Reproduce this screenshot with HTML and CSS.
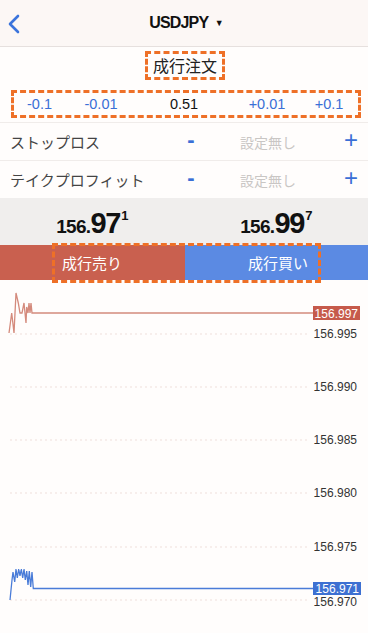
FILE: index.html
```html
<!DOCTYPE html>
<html lang="ja">
<head>
<meta charset="utf-8">
<title>USDJPY 成行注文</title>
<link rel="stylesheet" href="styles.css">
</head>
<body>
<div class="app">
  <header class="header">
    <div class="back">
      <svg width="14" height="20" viewBox="0 0 14 20"><path d="M11 2 L3 10 L11 18" fill="none" stroke="#3b74dc" stroke-width="2.6" stroke-linecap="round" stroke-linejoin="round"/></svg>
    </div>
    <div class="symbol">USDJPY <span class="caret">▼</span></div>
    <div></div>
  </header>

  <div class="title-wrap"><div class="title dashed">成行注文</div></div>

  <div class="steps dashed">
    <span class="step">-0.1</span>
    <span class="step">-0.01</span>
    <span class="step qty">0.51</span>
    <span class="step">+0.01</span>
    <span class="step">+0.1</span>
  </div>

  <div class="row">
    <span class="label">ストップロス</span>
    <span class="minus">-</span>
    <span class="none">設定無し</span>
    <span class="plus">+</span>
  </div>
  <div class="row">
    <span class="label">テイクプロフィット</span>
    <span class="minus">-</span>
    <span class="none">設定無し</span>
    <span class="plus">+</span>
  </div>

  <div class="prices">
    <div class="price"><span class="p-s">156.</span><span class="p-l">97</span><sup class="p-x">1</sup></div>
    <div class="price"><span class="p-s">156.</span><span class="p-l">99</span><sup class="p-x">7</sup></div>
  </div>

  <div class="buttons">
    <div class="btn sell">成行売り</div>
    <div class="btn buy">成行買い</div>
    <div class="btn-frame"></div>
  </div>

  <div class="chart">
    <svg width="368" height="353" viewBox="0 0 368 353">
      <g stroke="#efdfdb" stroke-width="1" stroke-dasharray="2 3">
        <line x1="10" y1="54" x2="308" y2="54"/>
        <line x1="10" y1="107" x2="308" y2="107"/>
        <line x1="10" y1="160" x2="308" y2="160"/>
        <line x1="10" y1="213" x2="308" y2="213"/>
        <line x1="10" y1="267" x2="308" y2="267"/>
        <line x1="10" y1="320" x2="308" y2="320"/>
      </g>
      <g class="axis" text-anchor="end">
        <text x="357" y="58">156.995</text>
        <text x="357" y="111">156.990</text>
        <text x="357" y="164">156.985</text>
        <text x="357" y="217">156.980</text>
        <text x="357" y="271">156.975</text>
        <text x="357" y="326">156.970</text>
      </g>
      <path d="M9 53 L11.7 33 L14 53 L16 13 L18.3 23 L20 33 L22 33 L24 23 L26 43 L26.7 27 L28 33 L29 23 L30 33 L31 23 L32 33 L313 33" fill="none" stroke="#d48a7c" stroke-width="1.3"/>
      <path d="M10 320 L12 300 L13 292 L14.7 302 L16 289 L17.3 298 L18.7 289 L20 296 L21.3 289 L22.7 298 L24 289 L25.3 300 L26.7 291 L28 305 L29.3 291 L30.7 307 L32 292 L33.3 308.5 L313 308.5" fill="none" stroke="#4a7cd8" stroke-width="1.3"/>
      <rect x="313" y="26" width="47" height="14" fill="#c65a4b"/>
      <text class="tag" x="358" y="37.5" text-anchor="end">156.997</text>
      <rect x="313" y="302" width="48" height="13" fill="#3d70d2"/>
      <text class="tag" x="359" y="313" text-anchor="end">156.971</text>
    </svg>
  </div>
</div>
</body>
</html>
```

FILE: styles.css
```css
* { box-sizing: border-box; }
html, body { margin: 0; padding: 0; }
body {
  background: #fffdfc;
  font-family: "Liberation Sans", "Noto Sans CJK JP", sans-serif;
  color: #333;
  width: 368px;
  height: 633px;
  overflow: hidden;
}
.app { width: 368px; }

.header {
  height: 47px;
  background: #fcf7f5;
  border-bottom: 1px solid #e6e0de;
  display: grid;
  grid-template-columns: 40px 1fr 40px;
  align-items: center;
}
.back { padding-left: 7px; padding-top: 2px; display: flex; align-items: center; }
.symbol {
  text-align: center;
  font-weight: bold;
  font-size: 16px;
  letter-spacing: -0.8px;
  color: #111;
  padding-left: 4px;
}
.caret { font-size: 9px; margin-left: 3px; vertical-align: 2px; }

.dashed { border: 3px dashed #ee7027; }

.title-wrap {
  display: flex;
  justify-content: center;
  padding-top: 4px;
  margin-left: 2px;
}
.title {
  height: 29px;
  padding: 0 5px;
  font-size: 16px;
  line-height: 23px;
  color: #222;
  font-family: "Noto Sans CJK JP", sans-serif;
}

.steps {
  margin: 10px 7px 4px 11px;
  height: 28px;
  display: grid;
  grid-template-columns: 51px 72px 94px 72px 52px;
  align-items: center;
}
.step {
  text-align: center;
  font-size: 14.5px;
  color: #3a6fd6;
}
.step.qty { color: #111; }

.row {
  height: 38px;
  border-top: 1px solid #f0ecea;
  display: grid;
  grid-template-columns: 172px 38px 126px 32px;
  align-items: center;
}
.label {
  padding-left: 10px;
  font-size: 15px;
  color: #444;
  font-family: "Noto Sans CJK JP", sans-serif;
  white-space: nowrap;
}
.minus {
  text-align: center;
  color: #3a6fd6;
  font-size: 22px;
  font-weight: bold;
  line-height: 1;
  padding-bottom: 3px;
}
.none {
  text-align: center;
  padding-right: 10px;
  font-size: 14px;
  color: #c9c6c4;
  font-family: "Noto Sans CJK JP", sans-serif;
}
.plus {
  text-align: center;
  color: #3a6fd6;
  font-size: 24px;
  line-height: 1;
  padding-bottom: 3px;
  padding-right: 2px;
}

.prices {
  height: 47px;
  background: #f0eeed;
  display: grid;
  grid-template-columns: 1fr 1fr;
  align-items: center;
}
.price {
  text-align: center;
  color: #111;
  font-weight: bold;
  line-height: 1;
  padding-top: 4px;
  letter-spacing: -0.7px;
}
.p-s { font-size: 19px; }
.p-l { font-size: 29px; letter-spacing: -1.2px; }
.p-x { font-size: 13px; vertical-align: 13px; margin-left: 1px; }

.buttons {
  position: relative;
  height: 35px;
  display: grid;
  grid-template-columns: 185px 183px;
}
.btn {
  color: #fff;
  font-size: 15px;
  line-height: 35px;
  font-family: "Noto Sans CJK JP", sans-serif;
}
.sell { background: #c9604f; padding-left: 62px; }
.buy { background: #5b8ae3; text-align: right; padding-right: 60px; }
.btn-frame {
  position: absolute;
  left: 52px;
  top: -2px;
  width: 269px;
  height: 40px;
  border: 3px dashed #ee7027;
}

.chart { height: 353px; }
.chart svg { display: block; }
.axis text {
  font-family: "Liberation Sans", sans-serif;
  font-size: 12px;
  fill: #333;
}
.tag {
  font-family: "Liberation Sans", sans-serif;
  font-size: 12px;
  fill: #fff;
}
```
